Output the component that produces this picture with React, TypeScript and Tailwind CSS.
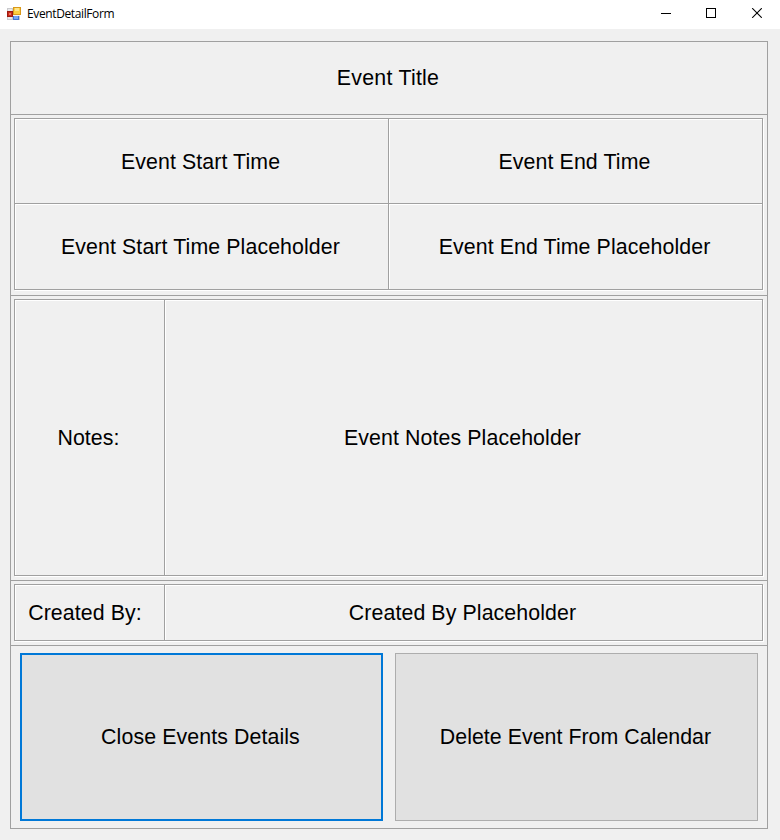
import React from "react";

type CellProps = { children: React.ReactNode; className?: string };

function Cell({ children, className = "" }: CellProps) {
  return (
    <div
      className={`flex items-center justify-center border-[#a0a0a0] pr-[2px] shadow-[inset_1px_1px_0_#ffffff] ${className}`}
    >
      <span className="whitespace-nowrap">{children}</span>
    </div>
  );
}

function Panel({ children, className = "" }: CellProps) {
  return (
    <div className={`ml-[3px] mr-[4px] mt-[3px] grid border border-[#a0a0a0] shadow-[1px_1px_0_#ffffff] ${className}`}>
      {children}
    </div>
  );
}

function FormIcon() {
  return (
    <svg width="14" height="14" viewBox="0 0 14 14" shapeRendering="crispEdges">
      <rect x="0" y="1" width="13" height="12" fill="#c9c9cc" />
      <rect x="1" y="2" width="4" height="2" fill="#e9e9ec" />
      <rect x="1" y="10" width="4" height="2" fill="#e9e9ec" />
      <rect x="0" y="4" width="6" height="6" fill="#9c1a10" />
      <rect x="1" y="5" width="4" height="4" fill="#c9281a" />
      <rect x="2" y="6" width="2" height="2" fill="#e8745c" />
      <rect x="6" y="0" width="8" height="8" fill="#d9981a" />
      <rect x="7" y="1" width="6" height="6" fill="#fbce3f" />
      <rect x="8" y="1" width="4" height="3" fill="#ffe487" />
      <rect x="6" y="8" width="7" height="1" fill="#f2f2f4" />
      <rect x="6" y="9" width="6" height="4" fill="#3f73d2" />
      <rect x="7" y="9" width="4" height="3" fill="#76a5f2" />
    </svg>
  );
}

export default function App() {
  return (
    <div className="flex h-[840px] w-[780px] flex-col bg-[#f0f0f0] text-black">
      <header className="flex h-[29px] items-start bg-white">
        <div className="flex h-[27px] items-center pl-[7px]">
          <FormIcon />
          <h1 className="ml-[6px] mt-px font-['Open_Sans','Noto_Sans',sans-serif] text-[12px] leading-4 tracking-[-0.38px]">
            EventDetailForm
          </h1>
        </div>
        <div className="ml-auto flex pt-2 pr-[18px]">
          <svg width="101" height="10" viewBox="0 0 101 10" fill="none" stroke="#000" shapeRendering="crispEdges">
            <path d="M0 5.5H10" />
            <rect x="45.5" y="0.5" width="9" height="9" />
            <path d="M91.2 0.2L100.8 9.8M100.8 0.2L91.2 9.8" shapeRendering="auto" strokeWidth="1.1" />
          </svg>
        </div>
      </header>

      <main className="ml-[10px] mt-3 flex h-[788px] w-[758px] flex-col border border-[#a0a0a0] font-['Liberation_Sans',Arial,sans-serif] text-[21.33px] leading-6 tracking-[0.1px]">
        <section className="flex h-[73px] items-center justify-center border-b border-[#a0a0a0] pr-[2px]">
          <span className="tracking-[0.25px]">Event Title</span>
        </section>
        <section className="h-[181px] border-b border-[#a0a0a0]">
          <Panel className="h-[172px] grid-cols-[373px_1fr] grid-rows-[84px_1fr]">
            <Cell className="pt-[2px]">Event Start Time</Cell>
            <Cell className="border-l pt-[2px]">Event End Time</Cell>
            <Cell className="border-t">Event Start Time Placeholder</Cell>
            <Cell className="border-l border-t">Event End Time Placeholder</Cell>
          </Panel>
        </section>
        <section className="h-[285px] border-b border-[#a0a0a0]">
          <Panel className="h-[277px] grid-cols-[149px_1fr]">
            <Cell>Notes:</Cell>
            <Cell className="border-l">Event Notes Placeholder</Cell>
          </Panel>
        </section>
        <section className="h-[65px] border-b border-[#a0a0a0]">
          <Panel className="h-[57px] grid-cols-[149px_1fr]">
            <Cell className="pr-[9px]">Created By:</Cell>
            <Cell className="border-l">Created By Placeholder</Cell>
          </Panel>
        </section>
        <section className="flex gap-3 pl-[9px] pt-[7px]">
          <button className="h-[168px] w-[363px] border-2 border-[#0078d7] bg-[#e1e1e1] pr-[2px] tracking-[0.1px]">
            Close Events Details
          </button>
          <button className="h-[168px] w-[363px] border border-[#adadad] bg-[#e1e1e1] pr-[2px] tracking-[0.04px]">
            Delete Event From Calendar
          </button>
        </section>
      </main>
    </div>
  );
}
